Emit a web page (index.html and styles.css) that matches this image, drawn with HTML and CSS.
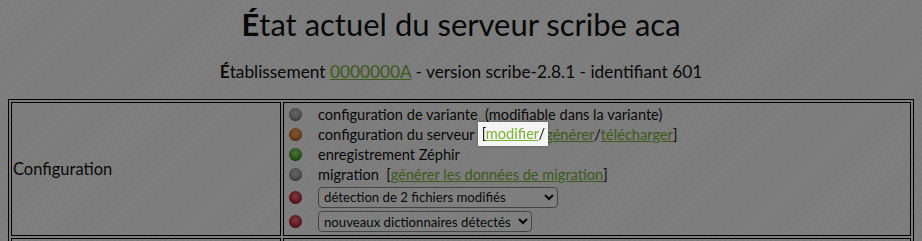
FILE: index.html
```html
<!DOCTYPE html>
<html lang="fr">
<head>
    <meta charset="UTF-8">
    <title>État actuel du serveur scribe aca</title>
    <link rel="stylesheet" href="styles.css">
</head>
<body>
    <h1>État actuel du serveur scribe aca</h1>
    <h3>Établissement <a href="#">0000000A</a> - version scribe-2.8.1 - identifiant 601</h3>

    <table class="status">
        <tr>
            <td class="label">Configuration</td>
            <td class="states">
                <ul>
                    <li><span class="light grey"></span>configuration de variante&nbsp;&nbsp;(modifiable dans la variante)</li>
                    <li><span class="light orange"></span>configuration du serveur&nbsp;&nbsp;<span class="highlight">[<a href="#">modifier</a>/</span><a href="#">générer</a>/<a href="#">télécharger</a>]</li>
                    <li><span class="light green"></span>enregistrement Zéphir</li>
                    <li><span class="light grey"></span>migration&nbsp;&nbsp;[<a href="#">générer les données de migration</a>]</li>
                    <li class="pick"><span class="light red"></span>
                        <select class="files"><option>détection de 2 fichiers modifiés</option></select>
                    </li>
                    <li class="pick"><span class="light red"></span>
                        <select class="dicos"><option>nouveaux dictionnaires détectés</option></select>
                    </li>
                </ul>
            </td>
        </tr>
        <tr>
            <td class="label">&nbsp;</td>
            <td class="states">&nbsp;</td>
        </tr>
    </table>

    <!-- voile de la visite guidée -->
    <div class="overlay"></div>
</body>
</html>
```

FILE: styles.css
```css
body {
    font-family: 'Lato', sans-serif;
    color: #111;
    margin: 8px;
    background-color: #fff;
    background-image: repeating-linear-gradient(135deg, #fff 0, #fff 2px, #f6f6f6 2px, #f6f6f6 4px);
}

h1 {
    text-align: center;
    font-weight: normal;
    font-size: 31px;
    margin: 0;
    line-height: 32px;
}

h1::first-letter,
h3::first-letter {
    font-weight: bold;
}

h3 {
    text-align: center;
    font-weight: normal;
    font-size: 17.3px;
    margin: 21px 0 16px;
    line-height: 22px;
}

a {
    color: #7ab432;
}

.status {
    width: 100%;
    border: 1px solid #000;
    border-spacing: 2px;
}

.status td {
    border: 1px solid #000;
    padding: 1px;
}

.label {
    width: 266px;
    font-size: 16.5px;
}

.states ul {
    list-style: none;
    margin: 0;
    padding: 0 0 0 4px;
    font-size: 14.6px;
}

.states li {
    display: flex;
    align-items: center;
    height: 20.25px;
    white-space: pre;
}

.states li.pick {
    height: 24.5px;
}

.light {
    width: 13px;
    height: 13px;
    border-radius: 50%;
    margin-right: 16px;
    flex: none;
    box-shadow: inset 0 -1px 2px rgba(0, 0, 0, 0.35);
}

.grey {
    background: radial-gradient(circle at 50% 40%, #c8c8c8 0, #a8a8a8 45%, #7a7a7a 100%);
}

.orange {
    background: radial-gradient(circle at 50% 40%, #f8b070 0, #e68a3c 45%, #b0602a 100%);
}

.green {
    background: radial-gradient(circle at 50% 40%, #a0e080 0, #5cba38 45%, #3a8a28 100%);
}

.red {
    background: radial-gradient(circle at 50% 40%, #f07a8a 0, #d83a50 45%, #9a2838 100%);
}

select {
    font-family: 'Lato', sans-serif;
    font-size: 13.2px;
    color: #111;
    background: #fff;
    border: 1px solid #888;
    border-radius: 4px;
    height: 21px;
    padding: 0 1px;
}

select.files {
    width: 240px;
}

select.dicos {
    width: 214px;
}

.highlight {
    position: relative;
    z-index: 10;
    background: #f4f4f4;
    box-shadow: 0 0 3px rgba(0, 0, 0, 0.3);
    padding: 3px 3px 4px 4px;
    margin: 0 -3px 0 -4px;
}

.overlay {
    position: fixed;
    top: 0;
    left: 0;
    right: 0;
    bottom: 0;
    background: rgba(0, 0, 0, 0.5);
    z-index: 5;
}
```
